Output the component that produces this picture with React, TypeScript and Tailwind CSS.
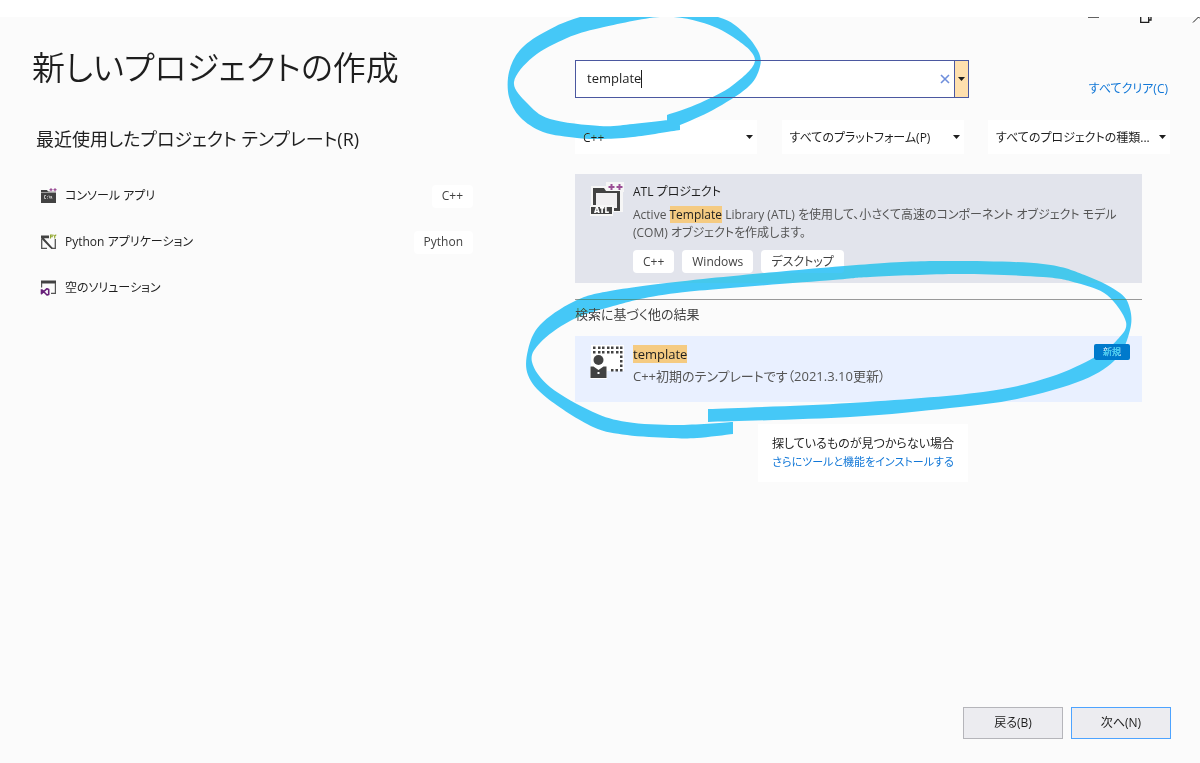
import { useState, type ReactNode } from "react";
import { clsx } from "clsx";

type Point = [number, number];

const recentTemplates = [
    { name: "コンソール アプリ", language: "C++", icon: <ConsoleIcon /> },
    { name: "Python アプリケーション", language: "Python", icon: <PythonIcon /> },
    { name: "空のソリューション", language: null, icon: <SolutionIcon /> },
];

function ConsoleIcon() {
    return (
        <svg width="17" height="16" viewBox="0 0 17 16" aria-hidden>
            <path d="M1 2h6l1 1.500H16V15H1z" fill="#424242" />
            <path d="M1 4.500h15" stroke="#fbfbfb" strokeWidth=".5" />
            <path d="M6 7.500H4.500v3H6M7.500 8v.8M7.500 9.800v.8M9 7.500l1 3M11 10.500V8l1 2.500" stroke="#d8d8d8" strokeWidth=".8" fill="none" />
            <path d="M9.500 0h7v3.500h-7z" fill="#fbfbfb" />
            <path d="M9.500 1.700h3M11 .2v3M13.500 1.700h3M15 .2v3" stroke="#9b4f96" strokeWidth="1.300" />
        </svg>
    );
}

function PythonIcon() {
    return (
        <svg width="17" height="16" viewBox="0 0 17 16" aria-hidden>
            <path d="M1.700 5v9.300H7M11 14.300h4.300V5" fill="none" stroke="#555" strokeWidth="1.300" />
            <path d="M1 1.500h8v2.800H4L13 14.300h-2.500L1 4.300z" fill="#424242" />
            <path d="M10.500 4.500V1h1.700v1.700h-1.700M13.500.7l1.200 1.700L16.200.7M14.700 2.400v2" fill="none" stroke="#93a832" strokeWidth="1.100" />
        </svg>
    );
}

function SolutionIcon() {
    return (
        <svg width="17" height="16" viewBox="0 0 17 16" aria-hidden>
            <path d="M1 .5h15v3H1z" fill="#424242" />
            <path d="M1.600 3v4.500M15.400 3v10.400H11" fill="none" stroke="#555" strokeWidth="1.200" />
            <path d="M1.500 9.300v4.400L7 8.700l1.700.8v4.900L7 15 1.500 9.500" fill="none" stroke="#68217a" strokeWidth="1.600" strokeLinejoin="round" />
        </svg>
    );
}

function AtlIcon() {
    return (
        <svg width="36" height="36" viewBox="0 0 36 36" className="shrink-0" aria-hidden>
            <path d="M2 4h16V0h17v10h-1v20H24v4H1V24h1z" fill="#f6f6f6" />
            <path d="M4 6h11l2 3h14v20h-6v-3h3V13H7v10H4z" fill="#424242" />
            <path d="M7 11h21v15h-3v-3H7z" fill="#f0eff1" />
            <path d="M17 0h18v9H17z" fill="#f6f6f6" />
            <path d="M19.500 5h6M22.500 2v6M27.500 5h6M30.500 2v6" stroke="#9b4f96" strokeWidth="2" />
            <path d="M2 25h21v7H2z" fill="#424242" />
            <text x="12.500" y="31" textAnchor="middle" fontSize="8" fontWeight="800" fill="#fff" className="font-['Open_Sans',sans-serif]">
                ATL
            </text>
        </svg>
    );
}

function TemplateIcon() {
    const columns = [4, 9, 13, 18, 22, 27, 31];
    return (
        <svg width="36" height="36" viewBox="0 0 36 36" className="shrink-0" aria-hidden>
            <path d="M2 1h33v26H18v8H1V22h1z" fill="#fff" />
            {columns.map((x) => (
                <path key={x} d={`M${x} 2.500h2.500v2.500h-2.500zM${x} 7h2.500v2.500h-2.500z`} fill="#424242" />
            ))}
            <path d="M31 11.500h2.500v2.500h-2.500zM31 16h2.500v2.500h-2.500zM31 20.500h2.500v2.500h-2.500zM31 25h2.500v2.500h-2.500zM26.500 25h2.500v2.500h-2.500zM22 25h2.500v2.500h-2.500z" fill="#424242" />
            <circle cx="9.500" cy="16" r="5" fill="#424242" />
            <path d="M1.500 22.500h3l5 3.500 5-3.500h3V34h-16z" fill="#424242" />
            <path d="M8.500 28h2v2h-2z" fill="#fff" />
        </svg>
    );
}

function Caret({ className }: { className?: string }) {
    return (
        <svg width="7" height="4" viewBox="0 0 7 4" className={className} aria-hidden>
            <path d="M0 0h7L3.500 4z" fill="#1e1e1e" />
        </svg>
    );
}

function Tag({ children }: { children: ReactNode }) {
    return <span className="flex h-[23px] items-center rounded bg-white px-2.5 text-[#424242]">{children}</span>;
}

function Mark({ children }: { children: ReactNode }) {
    return <mark className="bg-[#f5cb82] text-[#1e1e1e]">{children}</mark>;
}

function FilterSelect({ label, value }: { label: string; value: string }) {
    return (
        <div className="relative w-[182px]">
            <select
                aria-label={label}
                className="h-[34px] w-full appearance-none truncate bg-white pt-0.5 pr-5 pl-2 text-[#1e1e1e]"
            >
                <option>{value}</option>
            </select>
            <Caret className="pointer-events-none absolute top-[15px] right-1" />
        </div>
    );
}

// Smooth curve that runs through every point it is given.
function curve(points: Point[]) {
    return points
        .slice(1)
        .map(([x, y], i) => {
            const prev = points[i - 1] ?? points[i];
            const from = points[i];
            const next = points[i + 2] ?? [x, y];
            const c1 = [from[0] + (x - prev[0]) / 6, from[1] + (y - prev[1]) / 6];
            const c2 = [x - (next[0] - from[0]) / 6, y - (next[1] - from[1]) / 6];
            return `C${c1.join(" ")} ${c2.join(" ")} ${x} ${y}`;
        })
        .join("");
}

function strokeShape(outer: Point[], inner: Point[]) {
    return `M${outer[0].join(" ")}${curve(outer)}L${inner[0].join(" ")}${curve(inner)}Z`;
}

// Pen stroke around the search box
const searchStroke = strokeShape(
    [[680, 130], [633, 137], [600, 139], [577, 138], [543, 132], [520, 117], [509, 97], [509, 72], [520, 50], [543, 33], [580, 17], [650, 2], [718, 17], [743, 32], [759, 53], [759, 70], [747, 88], [713, 110], [680, 125], [667, 129]],
    [[667, 115], [700, 103], [733, 85], [755, 60], [733, 37], [700, 22], [660, 17], [600, 28], [567, 38], [533, 57], [514, 82], [527, 103], [550, 119], [600, 126], [633, 124], [667, 120], [680, 118]]
);

// Pen stroke around the second result
const resultStroke = strokeShape(
    [[733, 434], [697, 438], [670, 438], [627, 435], [593, 427], [547, 398], [528, 375], [528, 350], [540, 325], [573, 302], [610, 291], [703, 279], [870, 264], [953, 261], [1043, 264], [1087, 276], [1120, 293], [1130, 309], [1130, 330], [1117, 358], [1083, 380], [1017, 399], [950, 408], [850, 417], [708, 422]],
    [[708, 409], [850, 403], [983, 392], [1050, 377], [1095, 357], [1117, 340], [1126, 322], [1107, 295], [1077, 283], [1043, 277], [960, 274], [870, 277], [833, 280], [677, 293], [610, 307], [570, 321], [540, 343], [532, 362], [550, 387], [593, 412], [627, 422], [677, 425], [733, 422]]
);

function PenMarks() {
    return (
        <svg
            width="640"
            height="430"
            viewBox="500 17 640 430"
            className="pointer-events-none absolute top-0 -left-[75px] mix-blend-darken"
            aria-hidden
        >
            <path d={searchStroke} fill="#45c8f7" />
            <path d={resultStroke} fill="#45c8f7" />
        </svg>
    );
}

function WindowControls() {
    return (
        <div className="absolute top-0 right-0 flex h-1.5 gap-10 overflow-hidden text-[#1e1e1e]">
            <button aria-label="最小化" className="flex w-3 items-start">
                <svg width="12" height="6" viewBox="0 0 12 6">
                    <path d="M0 .5h11" stroke="currentColor" strokeWidth=".7" />
                </svg>
            </button>
            <button aria-label="元に戻す" className="flex w-3 items-start">
                <svg width="12" height="6" viewBox="0 0 12 6">
                    <path d="M.7 0v5.300h8V0M8.700 3h2.300V0" fill="none" stroke="currentColor" strokeWidth="1.300" />
                </svg>
            </button>
            <button aria-label="閉じる" className="flex w-2 items-start">
                <svg width="8" height="6" viewBox="0 0 8 6">
                    <path d="M1 5.500L6.500 0 8 1.500" fill="none" stroke="currentColor" />
                </svg>
            </button>
        </div>
    );
}

export default function App() {
    const [query, setQuery] = useState("template");

    return (
        <div className="min-h-screen bg-white pt-[17px] font-['Open_Sans','Noto_Sans_CJK_JP',sans-serif] text-[12px] text-[#1e1e1e] [font-feature-settings:'palt']">
            <div className="relative flex min-h-[calc(100vh-17px)] flex-col bg-[#fbfbfb]">
                <WindowControls />
                <main className="flex flex-1">
                    <section className="w-[575px] shrink-0 pl-8">
                        <h1 className="pt-6 text-[33px] leading-[54px] font-[350] whitespace-nowrap">新しいプロジェクトの作成</h1>
                        <h2 className="mt-7 pl-1 text-[18px] leading-8 whitespace-nowrap">
                            最近使用したプロジェクト テンプレート(R)
                        </h2>
                        <ul className="mt-[18px] w-[441px] pl-2">
                            {recentTemplates.map((item) => (
                                <li key={item.name} className="flex h-[46px] items-center">
                                    {item.icon}
                                    <span className="ml-2 flex-1">{item.name}</span>
                                    {item.language && <Tag>{item.language}</Tag>}
                                </li>
                            ))}
                        </ul>
                    </section>

                    <section className="relative min-w-0 flex-1 pt-[43px]">
                        <div className="flex items-end justify-between pr-8">
                            <div className="flex h-[38px] w-[394px] items-center border border-[#4b58a0] bg-white">
                                <label className="flex h-full flex-1 cursor-text items-center pl-[11px]">
                                    <input
                                        aria-label="テンプレートの検索"
                                        value={query}
                                        onChange={(e) => setQuery(e.target.value)}
                                        className="field-sizing-content text-[13px] caret-transparent outline-none"
                                    />
                                    <span className="h-[18px] w-px bg-[#1e1e1e]" />
                                </label>
                                <button aria-label="検索のクリア" className="p-1" onClick={() => setQuery("")}>
                                    <svg width="10" height="10" viewBox="0 0 10 10">
                                        <path d="M1 1l8 8M9 1L1 9" stroke="#6f8fdc" strokeWidth="1.600" />
                                    </svg>
                                </button>
                                <button
                                    aria-label="検索履歴"
                                    className="flex h-full w-3.5 items-center justify-center border-l border-[#4b58a0] bg-[#ffe0ae]"
                                >
                                    <Caret />
                                </button>
                            </div>
                            <a href="#clear" className="text-[#1177d7]">
                                すべてクリア(C)
                            </a>
                        </div>

                        <div className="mt-[22px] flex justify-between pr-[30px]">
                            <FilterSelect label="言語" value="C++" />
                            <FilterSelect label="プラットフォーム" value="すべてのプラットフォーム(P)" />
                            <FilterSelect label="プロジェクトの種類" value="すべてのプロジェクトの種類..." />
                        </div>

                        <div className="mt-5 mr-[58px]">
                            <article className="flex h-[109px] gap-2 bg-[#e2e4ec] pt-2 pl-3.5">
                                <AtlIcon />
                                <div className="whitespace-nowrap">
                                    <h3 className="leading-5">ATL プロジェクト</h3>
                                    <p className="mt-1 leading-[18px] text-[#555]">
                                        Active <Mark>Template</Mark> Library (ATL) を使用して、小さくて高速のコンポーネント オブジェクト モデル
                                        <br />
                                        (COM) オブジェクトを作成します。
                                    </p>
                                    <div className="mt-2 flex gap-2">
                                        <Tag>C++</Tag>
                                        <Tag>Windows</Tag>
                                        <Tag>デスクトップ</Tag>
                                    </div>
                                </div>
                            </article>
                            <hr className="mt-4 border-[#999]" />
                            <h3 className="mt-1 text-[13px] leading-5 text-[#424242]">検索に基づく他の結果</h3>
                            <article className="mt-3 flex h-[66px] gap-2 bg-[#e9f0ff] pt-2 pr-3 pl-3.5 text-[13px]">
                                <TemplateIcon />
                                <div className="flex-1">
                                    <h3 className="leading-5">
                                        <Mark>template</Mark>
                                    </h3>
                                    <p className="mt-0.5 leading-5 text-[#555]">C++初期のテンプレートです（2021.3.10更新）</p>
                                </div>
                                <span className="flex h-4 w-9 items-center justify-center rounded-xs bg-[#007acc] text-[9px] text-white">
                                    新規
                                </span>
                            </article>
                            <div className={clsx("mt-[22px] ml-[183px] w-[210px] bg-white py-[11px] text-center", "leading-[18px]")}>
                                <p>探しているものが見つからない場合</p>
                                <a href="#install" className="text-[11px] text-[#1177d7]">
                                    さらにツールと機能をインストールする
                                </a>
                            </div>
                        </div>
                        <PenMarks />
                    </section>
                </main>

                <footer className="flex justify-end gap-2 pr-[29px] pb-6">
                    <button className="h-8 w-[100px] border border-[#b5b5ba] bg-[#ececf0]">戻る(B)</button>
                    <button className="h-8 w-[100px] border border-[#4da3ff] bg-[#ececf0]">次へ(N)</button>
                </footer>
            </div>
        </div>
    );
}
